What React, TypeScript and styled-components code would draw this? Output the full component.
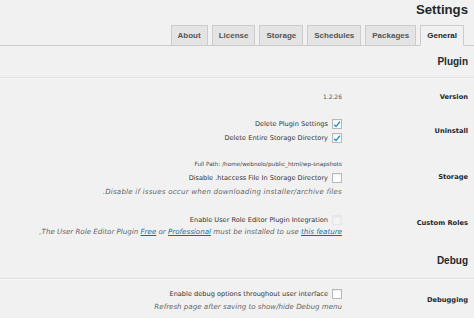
import React from "react";
import styled, { createGlobalStyle } from "styled-components";

const Global = createGlobalStyle`
  html, body { margin: 0; padding: 0; background: #f1f1f1; }
  body { font-family: "DejaVu Sans", Verdana, sans-serif; color: #333; }
`;

const Page = styled.div`
  width: 474px;
  height: 318px;
  overflow: hidden;
  background: #f1f1f1;
`;

const Title = styled.h1`
  margin: 0;
  padding: 2px 6px 0 0;
  height: 22px;
  box-sizing: border-box;
  text-align: right;
  font-family: "Liberation Sans", Arial, sans-serif;
  font-weight: bold;
  font-size: 13.2px;
  line-height: 16px;
  color: #23282d;
`;

const TabBar = styled.div`
  display: flex;
  justify-content: flex-end;
  align-items: flex-end;
  gap: 4px;
  height: 24px;
  padding: 0 10px 0 0;
  border-bottom: 1px solid #cccccc;
  box-sizing: border-box;
`;

const Tab = styled.div<{ $active?: boolean }>`
  height: 21px;
  box-sizing: border-box;
  display: flex;
  align-items: center;
  padding: 0 6px;
  margin-bottom: -1px;
  border: 1px solid #cccccc;
  border-bottom-color: ${(p) => (p.$active ? "#f1f1f1" : "#cccccc")};
  background: ${(p) => (p.$active ? "#f1f1f1" : "#e4e4e4")};
  font-family: "Liberation Sans", Arial, sans-serif;
  font-weight: bold;
  font-size: 8px;
  color: ${(p) => (p.$active ? "#1d1d1d" : "#555555")};
`;

const SectionHead = styled.div<{ $h: number }>`
  height: ${(p) => p.$h}px;
  box-sizing: border-box;
  display: flex;
  align-items: center;
  justify-content: flex-end;
  padding: 0 6px 0 0;
  border-bottom: 1px solid #dedede;
  box-shadow: 0 1px 0 #fafafa;
  font-family: "Liberation Sans", Arial, sans-serif;
  font-weight: bold;
  font-size: 10px;
  color: #23282d;
`;

const Row = styled.div<{ $h: number }>`
  height: ${(p) => p.$h}px;
  display: grid;
  grid-template-columns: 1fr 126px;
  align-items: center;
  padding-right: 6px;
`;

const Field = styled.div`
  display: flex;
  flex-direction: column;
  align-items: flex-end;
  font-size: 6.6px;
  color: #333;
`;

const Label = styled.div<{ $dy?: number }>`
  text-align: right;
  font-weight: bold;
  font-size: 6.7px;
  color: #23282d;
  transform: translateY(${(p) => p.$dy || 0}px);
`;

const Line = styled.div<{ $h?: number }>`
  display: flex;
  align-items: center;
  height: ${(p) => p.$h || 11}px;
  white-space: nowrap;
`;

const Small = styled.div`
  font-size: 5.7px;
  color: #444;
  height: 11px;
  display: flex;
  align-items: center;
  white-space: nowrap;
`;

const Version = styled.div`
  font-size: 6px;
  color: #555;
`;

const Note = styled.div<{ $wide?: boolean }>`
  font-style: italic;
  font-size: 7.1px;
  letter-spacing: ${(p) => (p.$wide ? "0.2px" : "0")};
  color: #666;
  height: 12px;
  display: flex;
  align-items: center;
  white-space: pre;
`;

const Link = styled.a`
  color: #0073aa;
  text-decoration: underline;
`;

const Box = styled.span<{ $disabled?: boolean }>`
  display: inline-flex;
  align-items: center;
  justify-content: center;
  width: 8px;
  height: 8px;
  margin-left: 4px;
  border: 1px solid ${(p) => (p.$disabled ? "#e6e6e6" : "#b4b9be")};
  background: ${(p) => (p.$disabled ? "#f4f4f4" : "#ffffff")};
  box-shadow: inset 0 1px 2px rgba(0, 0, 0, 0.08);
`;

const Check = ({ checked, disabled }: { checked?: boolean; disabled?: boolean }) => (
  <Box $disabled={disabled}>
    {checked && (
      <svg width="9" height="9" viewBox="0 0 10 10">
        <path d="M1.5 5.2 L3.8 7.6 L8.6 1.6" fill="none" stroke="#1e8cbe" strokeWidth="1.7" />
      </svg>
    )}
  </Box>
);

export default function App() {
  return (
    <Page>
      <Global />
      <Title>Settings</Title>
      <TabBar>
        <Tab>About</Tab>
        <Tab>License</Tab>
        <Tab>Storage</Tab>
        <Tab>Schedules</Tab>
        <Tab>Packages</Tab>
        <Tab $active>General</Tab>
      </TabBar>
      <SectionHead $h={32}>Plugin</SectionHead>
      <Row $h={37}>
        <Field>
          <Version>1.2.26</Version>
        </Field>
        <Label>Version</Label>
      </Row>
      <Row $h={32}>
        <Field>
          <Line $h={14}>
            Delete Plugin Settings <Check checked />
          </Line>
          <Line $h={14}>
            Delete Entire Storage Directory <Check checked />
          </Line>
        </Field>
        <Label>Uninstall</Label>
      </Row>
      <Row $h={62}>
        <Field>
          <Small>Full Path: /home/webnolo/public_html/wp-snapshots</Small>
          <Line $h={16}>
            Disable .htaccess File In Storage Directory <Check />
          </Line>
          <Note $wide>.Disable if issues occur when downloading installer/archive files</Note>
        </Field>
        <Label $dy={-1}>Storage</Label>
      </Row>
      <Row $h={34}>
        <Field>
          <Line>
            Enable User Role Editor Plugin Integration <Check disabled />
          </Line>
          <Note>
            {",The User Role Editor Plugin "}
            <Link>Free</Link>
            {" or "}
            <Link>Professional</Link>
            {" must be installed to use "}
            <Link>this feature</Link>
          </Note>
        </Field>
        <Label $dy={-3}>Custom Roles</Label>
      </Row>
      <SectionHead $h={36}>Debug</SectionHead>
      <Row $h={41}>
        <Field>
          <Line $h={13}>
            Enable debug options throughout user interface <Check />
          </Line>
          <Note>Refresh page after saving to show/hide Debug menu</Note>
        </Field>
        <Label>Debugging</Label>
      </Row>
    </Page>
  );
}
